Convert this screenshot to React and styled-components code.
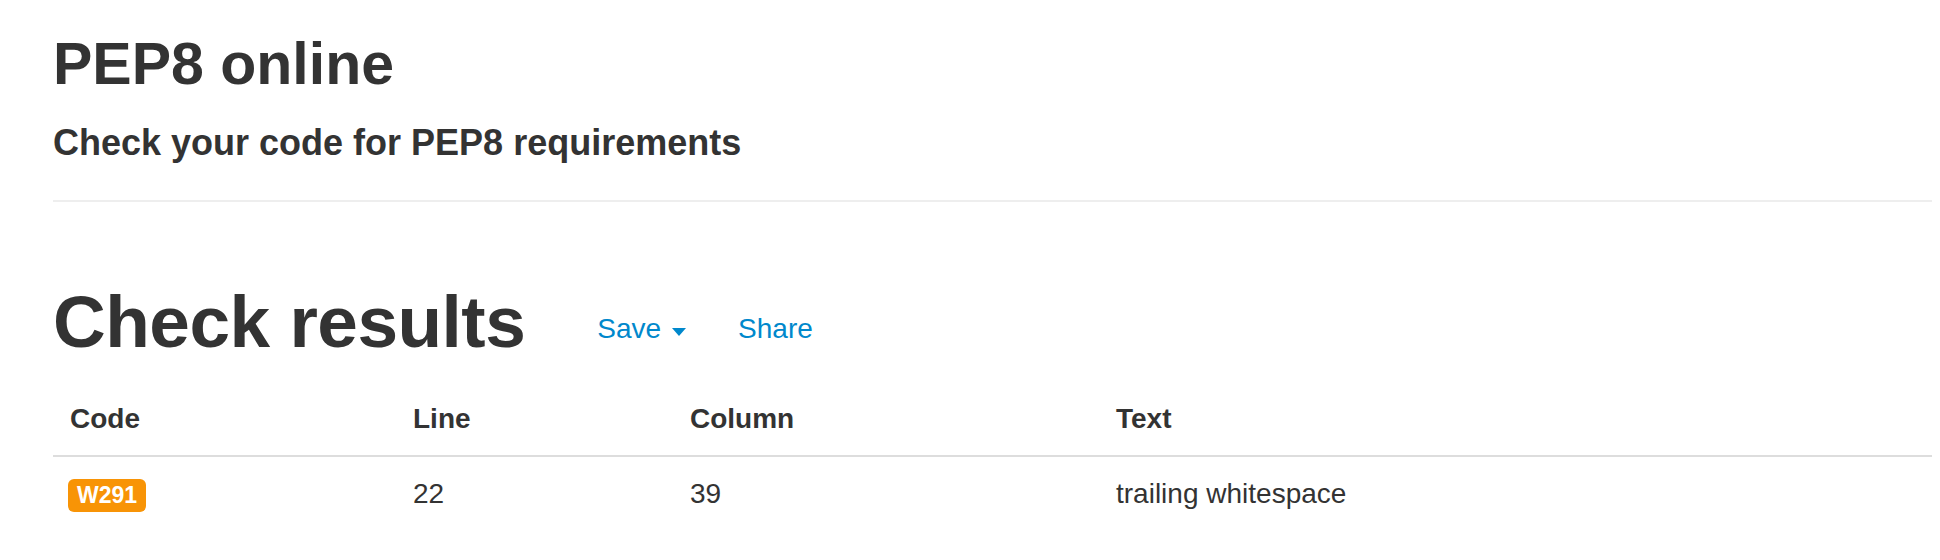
import styled, { createGlobalStyle } from "styled-components";

const GlobalStyle = createGlobalStyle`
  html, body {
    margin: 0;
    padding: 0;
    background: #fff;
  }
  body {
    font-family: "Liberation Sans", Arial, Helvetica, sans-serif;
    color: #333;
  }
`;

const results = [
  { code: "W291", line: 22, column: 39, text: "trailing whitespace" },
];

const App = () => {
  return (
    <Page>
      <GlobalStyle />
      <Title>PEP8 online</Title>
      <Subtitle>Check your code for PEP8 requirements</Subtitle>
      <Divider />

      <ResultsHeader>
        <Heading>Check results</Heading>
        <Actions>
          <Link href="#">
            Save
            <Caret />
          </Link>
          <Link href="#">Share</Link>
        </Actions>
      </ResultsHeader>

      <Table>
        <thead>
          <tr>
            <Th width={309}>Code</Th>
            <Th width={243}>Line</Th>
            <Th width={392}>Column</Th>
            <Th>Text</Th>
          </tr>
        </thead>
        <tbody>
          {results.map((r, i) => (
            <tr key={i}>
              <Td>
                <Badge>{r.code}</Badge>
              </Td>
              <Td>{r.line}</Td>
              <Td>{r.column}</Td>
              <Td>{r.text}</Td>
            </tr>
          ))}
        </tbody>
      </Table>
    </Page>
  );
};

export default App;

const Page = styled.div`
  padding: 32px 8px 40px 53px;
`;

const Title = styled.h1`
  margin: 0;
  font-size: 59px;
  line-height: 1.1;
  font-weight: 700;
`;

const Subtitle = styled.h4`
  margin: 26px 0 0;
  font-size: 36px;
  line-height: 1.1;
  font-weight: 700;
`;

const Divider = styled.hr`
  margin: 38px 0 0;
  border: 0;
  border-top: 2px solid #eee;
`;

const ResultsHeader = styled.div`
  display: flex;
  align-items: flex-start;
  margin-top: 80px;
`;

const Heading = styled.h2`
  margin: 0;
  font-size: 73px;
  line-height: 1.1;
  font-weight: 700;
  letter-spacing: -0.5px;
`;

const Actions = styled.div`
  display: flex;
  gap: 52px;
  margin: 27px 0 0 72px;
`;

const Link = styled.a`
  display: inline-flex;
  align-items: center;
  font-size: 28px;
  line-height: 40px;
  color: #0088cc;
  text-decoration: none;
`;

const Caret = styled.span`
  display: inline-block;
  width: 0;
  height: 0;
  margin: 6px 0 0 11px;
  border-top: 8px solid #0088cc;
  border-left: 7px solid transparent;
  border-right: 7px solid transparent;
`;

const Table = styled.table`
  width: 100%;
  margin-top: 20px;
  border-collapse: collapse;
  table-layout: fixed;
  font-size: 28px;
  line-height: 40px;
`;

const Th = styled.th`
  width: ${(p) => (p.width ? `${p.width}px` : "auto")};
  padding: 16px 17px;
  text-align: left;
  font-weight: 700;
  border-bottom: 2px solid #ddd;
`;

const Td = styled.td`
  padding: 17px 17px 16px;
  text-align: left;
  vertical-align: top;
`;

const Badge = styled.span`
  display: inline-block;
  padding: 0 9px;
  margin: 5px 0 0 -2px;
  height: 33px;
  line-height: 33px;
  vertical-align: top;
  font-size: 23px;
  font-weight: 700;
  color: #fff;
  background: #f89406;
  border-radius: 6px;
`;
